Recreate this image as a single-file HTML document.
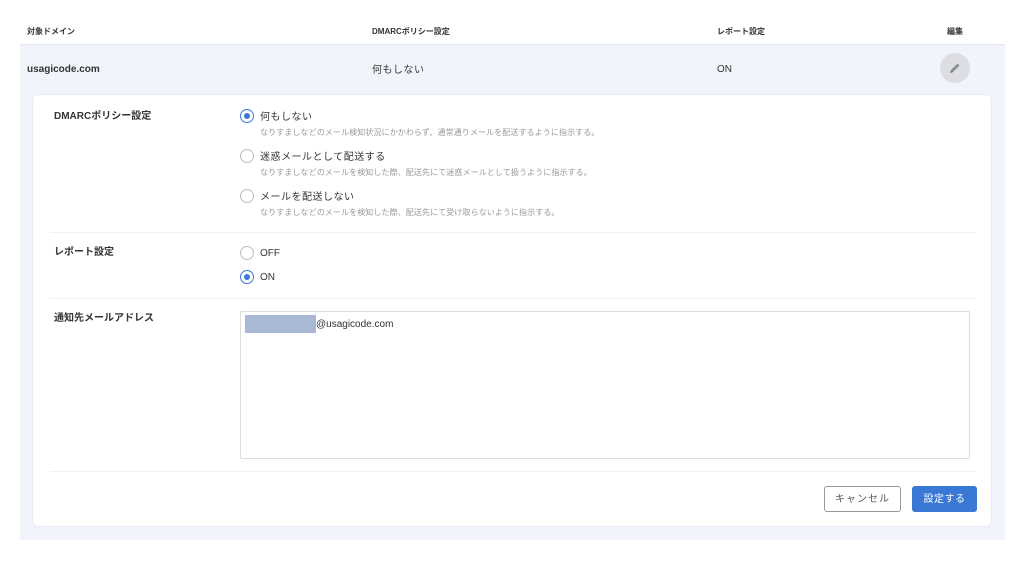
<!DOCTYPE html>
<html><head><meta charset="utf-8"><style>
*{margin:0;padding:0;box-sizing:border-box}
body{width:1024px;height:564px;background:#fff;font-family:"Liberation Sans","Noto Sans CJK JP",sans-serif;color:#333;position:relative;overflow:hidden;line-height:1.2}
.a{position:absolute;white-space:nowrap}
.h{font-size:8px;font-weight:bold;color:#333}
.lbl{font-size:10px;font-weight:bold;color:#333}
.r{position:absolute;width:14px;height:14px;border-radius:50%;border:1px solid #bbb;background:#fff}
.r.on{border:1.5px solid #3a78d6}
.r.on:after{content:"";position:absolute;left:2.5px;top:2.5px;width:6px;height:6px;border-radius:50%;background:#3a78d6}
.opt{font-size:10px;color:#333;letter-spacing:0.5px}
.desc{font-size:8px;color:#999;letter-spacing:0.1px}
.div{position:absolute;left:50px;width:925px;height:1px;background:#eef0f3}
.btn{position:absolute;height:26px;border-radius:3px;font-size:10px;text-align:center;letter-spacing:1px;padding-top:0}
</style></head><body>
<div class="a h" style="left:27px;top:27px">対象ドメイン</div>
<div class="a h" style="left:372px;top:27px">DMARCポリシー設定</div>
<div class="a h" style="left:717px;top:27px">レポート設定</div>
<div class="a h" style="left:947px;top:27px">編集</div>
<div class="a" style="left:20px;top:44px;width:985px;height:496px;background:#f1f4fb;border-top:1px solid #e4e8f0"></div>
<div class="a" style="left:27px;top:64px;font-size:10px;font-weight:bold">usagicode.com</div>
<div class="a" style="left:372px;top:65px;font-size:10px;letter-spacing:0.5px">何もしない</div>
<div class="a" style="left:717px;top:64px;font-size:10px">ON</div>
<div class="a" style="left:940px;top:53px;width:30px;height:30px;border-radius:50%;background:#dcdee3"></div>
<svg class="a" style="left:948px;top:61px" width="14" height="14" viewBox="0 0 14 14"><path d="M2 12 L2.5 9.5 L9.5 2.5 L11.5 4.5 L4.5 11.5 Z" fill="#8a8d94"/></svg>
<div class="a" style="left:32px;top:94px;width:960px;height:433px;background:#fff;border-radius:6px;border:1px solid #e8ebf1"></div>
<div class="a lbl" style="left:54px;top:111px">DMARCポリシー設定</div>
<div class="r on" style="left:240px;top:109px"></div>
<div class="a opt" style="left:260px;top:112px">何もしない</div>
<div class="a desc" style="left:260px;top:128px">なりすましなどのメール検知状況にかかわらず、通常通りメールを配送するように指示する。</div>
<div class="r" style="left:240px;top:149px"></div>
<div class="a opt" style="left:260px;top:152px">迷惑メールとして配送する</div>
<div class="a desc" style="left:260px;top:168px">なりすましなどのメールを検知した際、配送先にて迷惑メールとして扱うように指示する。</div>
<div class="r" style="left:240px;top:189px"></div>
<div class="a opt" style="left:260px;top:192px">メールを配送しない</div>
<div class="a desc" style="left:260px;top:208px">なりすましなどのメールを検知した際、配送先にて受け取らないように指示する。</div>
<div class="div" style="top:232px"></div>
<div class="a lbl" style="left:54px;top:247px">レポート設定</div>
<div class="r" style="left:240px;top:246px"></div>
<div class="a" style="left:260px;top:248px;font-size:10px">OFF</div>
<div class="r on" style="left:240px;top:270px"></div>
<div class="a" style="left:260px;top:272px;font-size:10px">ON</div>
<div class="div" style="top:298px"></div>
<div class="a lbl" style="left:54px;top:313px">通知先メールアドレス</div>
<div class="a" style="left:240px;top:311px;width:730px;height:148px;border:1px solid #ddd;border-radius:2px"></div>
<div class="a" style="left:245px;top:315px;width:71px;height:18px;background:#a9b9d3"></div>
<div class="a" style="left:316px;top:319px;font-size:10px">@usagicode.com</div>
<div class="div" style="top:471px"></div>
<div class="a" style="left:824px;top:486px;width:77px;height:26px;border:1px solid #999;border-radius:3px"></div>
<div class="a" style="left:824px;top:494px;width:77px;text-align:center;font-size:10px;color:#555;letter-spacing:1px">キャンセル</div>
<div class="a" style="left:912px;top:486px;width:65px;height:26px;background:#3a78d6;border-radius:3px"></div>
<div class="a" style="left:912px;top:494px;width:65px;text-align:center;font-size:10px;color:#fff;letter-spacing:0.5px">設定する</div>
</body></html>
